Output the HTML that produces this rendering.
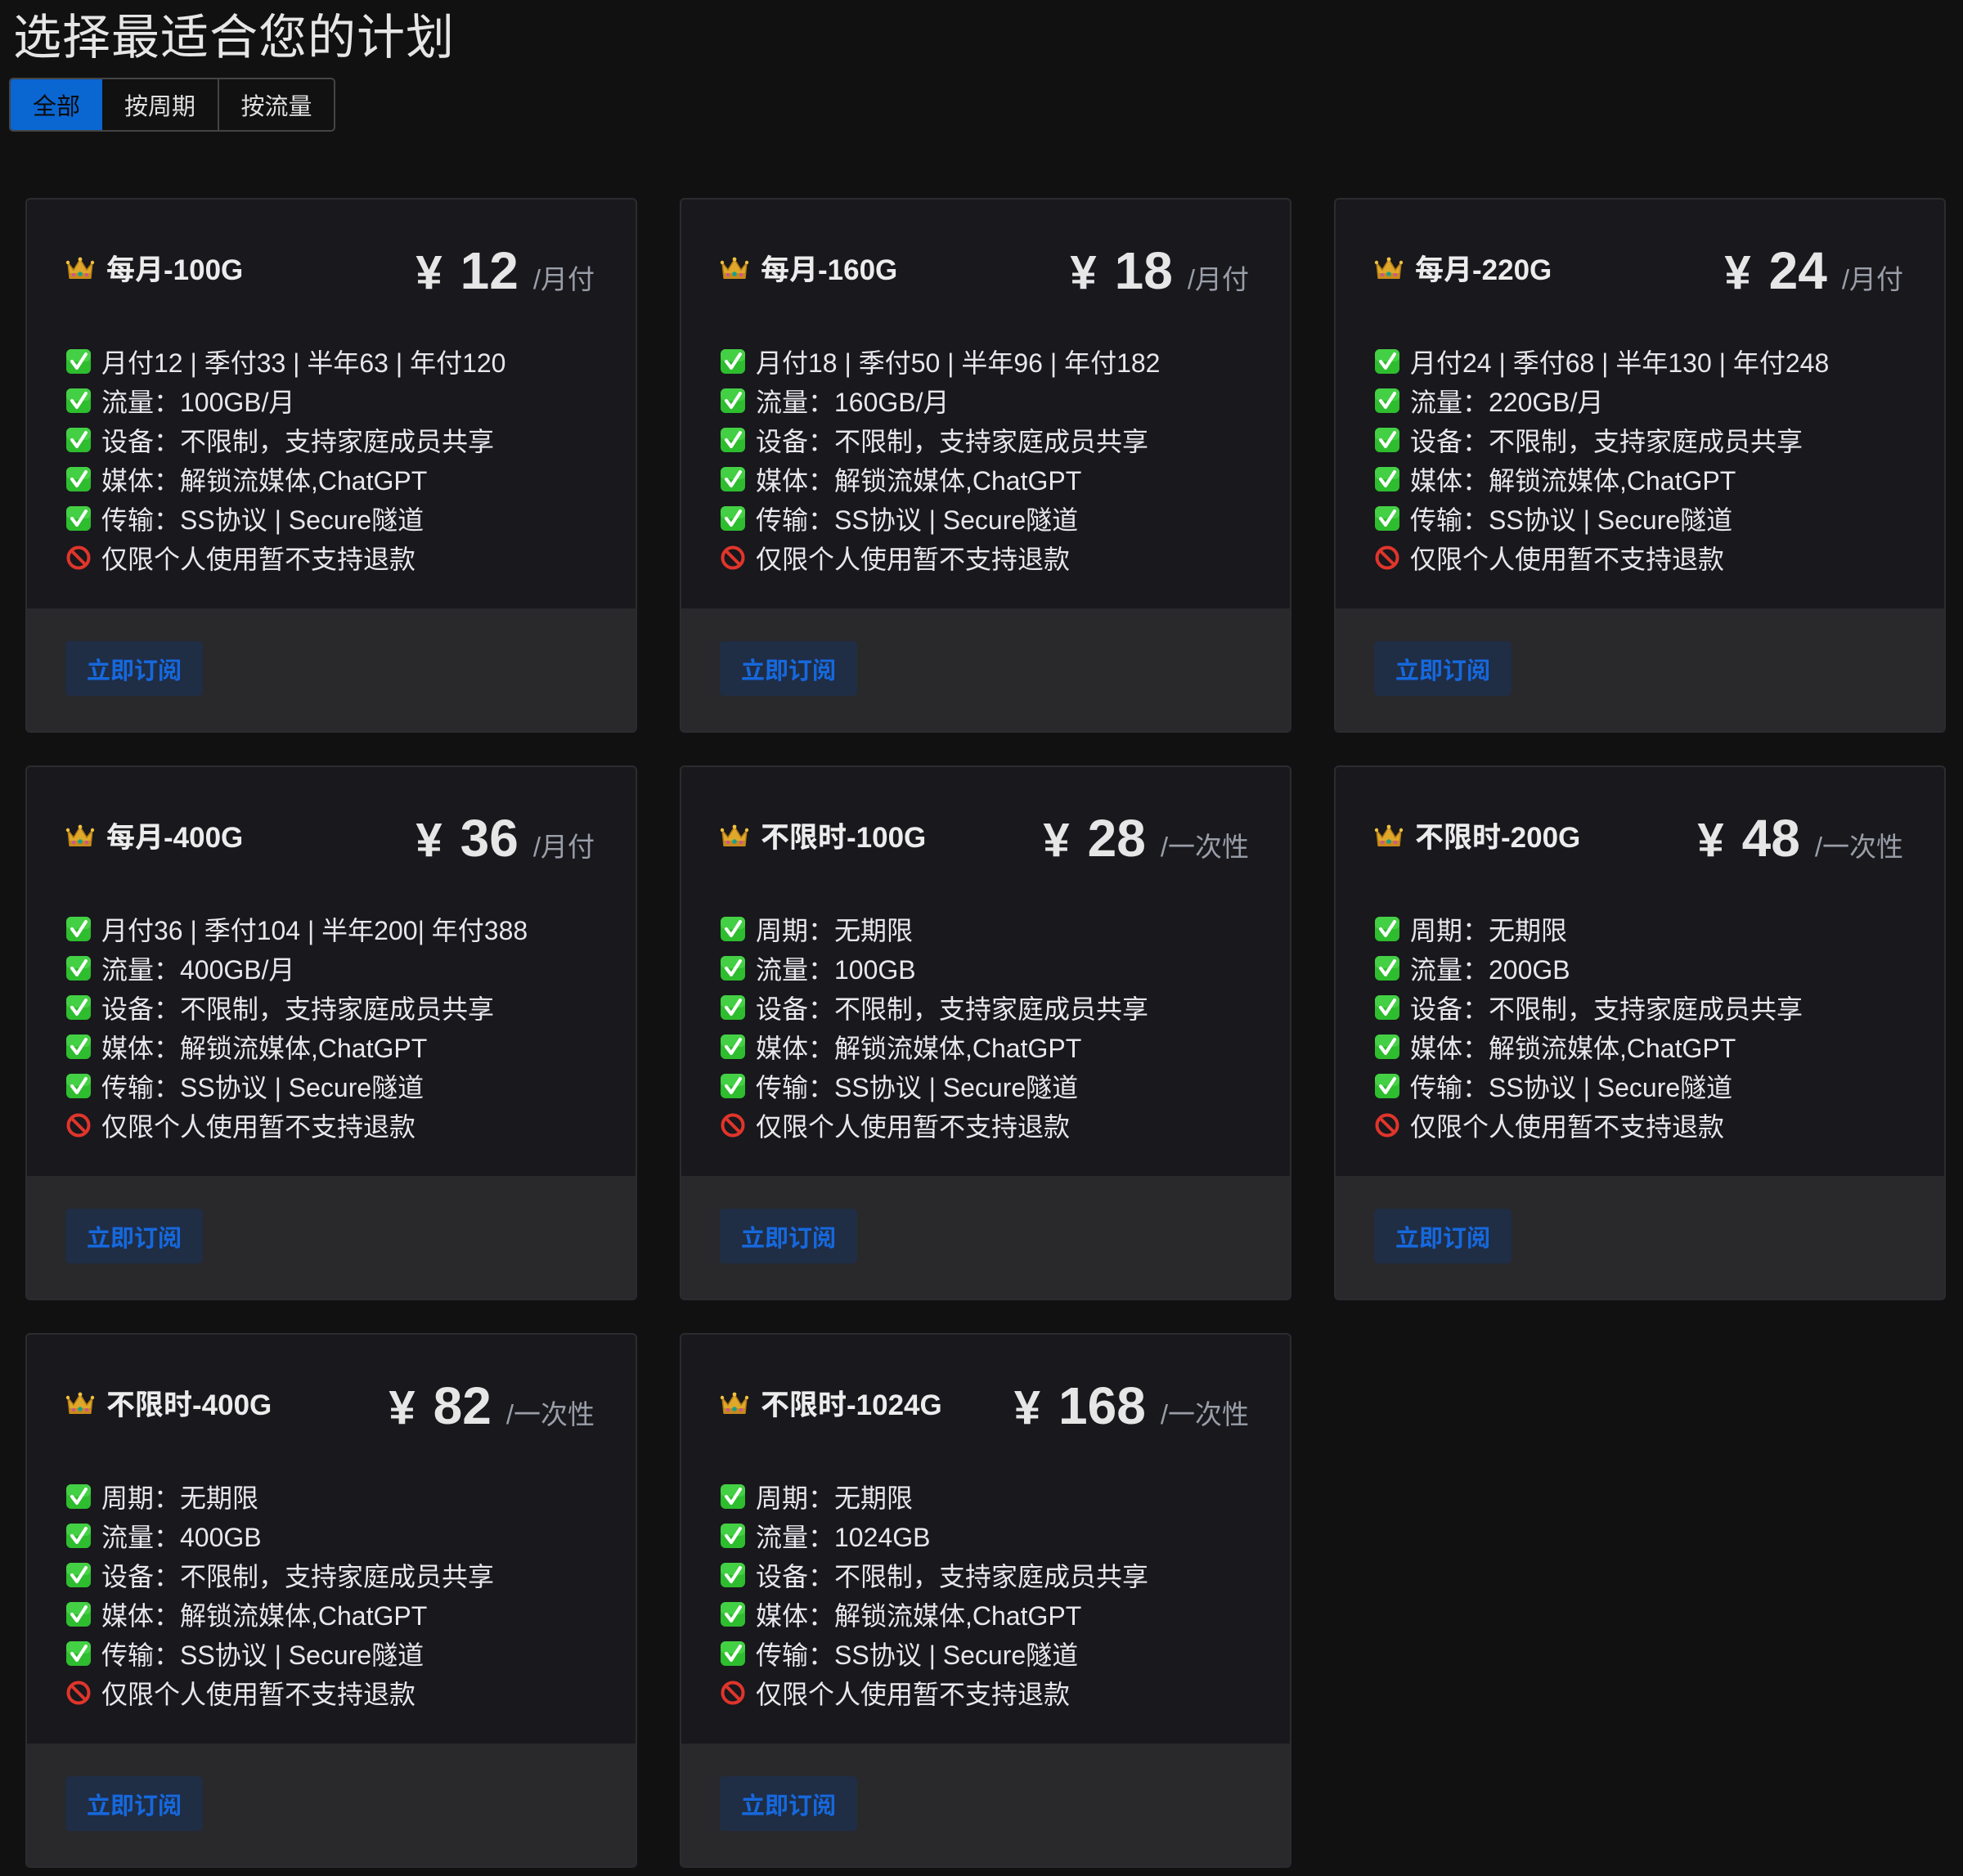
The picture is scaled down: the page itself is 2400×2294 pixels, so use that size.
<!DOCTYPE html>
<html><head><meta charset="utf-8">
<style>
*{box-sizing:border-box;margin:0;padding:0}
html,body{width:2400px;height:2294px;background:#111112;overflow:hidden}
body{font-family:"Liberation Sans","Noto Sans CJK SC",sans-serif;color:#e3e3e6;position:relative}
h1{position:absolute;left:16px;top:-2px;font-size:59px;font-weight:400;color:#e6e6e6;letter-spacing:1px}
.tabs{position:absolute;left:11px;top:95px;height:66px;display:flex;border:2px solid #444;border-radius:5px;overflow:hidden}
.tabs div{height:100%;display:flex;align-items:center;justify-content:center;font-size:29px;color:#e0e0e0}
.tabs .a{width:112px;background:#0a66d1;color:#0b0b0b}
.tabs .b{width:143px;border-right:2px solid #444}
.tabs .c{width:140px}
.card{position:absolute;width:748px;height:654px;background:#18181d;border:2px solid #2b2b30;border-radius:6px;overflow:hidden}
.hd{position:absolute;left:47px;right:50px;top:50px;height:70px}
.nm{position:absolute;left:0;top:8px;display:flex;align-items:center;font-size:35px;font-weight:700;color:#ececec}
.nm svg{margin-right:14px}
.pr{position:absolute;right:0;top:0;white-space:nowrap;color:#e6e6e6}
.pr .y{font-size:58px;font-weight:700;margin-right:22px}
.pr .n{font-size:64px;font-weight:700}
.pr .u{font-size:33px;color:#9a9ea8;margin-left:18px}
.ft{position:absolute;left:47px;top:174px}
.ft div{height:48px;display:flex;align-items:center;font-size:32px;color:#e8e8ea;white-space:nowrap}
.ft svg{margin-right:12px;flex:none}
.fo{position:absolute;left:0;right:0;bottom:0;height:150px;background:#29292c}
.btn{position:absolute;left:47px;top:40px;width:168px;height:67px;background:#1f2d45;border-radius:5px;color:#1668dc;font-size:29px;font-weight:700;display:flex;align-items:center;justify-content:center}
</style></head><body>
<h1>选择最适合您的计划</h1>
<div class="tabs"><div class="a">全部</div><div class="b">按周期</div><div class="c">按流量</div></div>
<svg width="0" height="0" style="position:absolute">
<defs>
<symbol id="ck" viewBox="0 0 32 32"><rect x="1" y="1" width="30" height="30" rx="6" fill="#2ebd2e"/><rect x="1" y="1" width="30" height="15" rx="6" fill="#44d044"/><path d="M8 16 L14 24 L25 7" stroke="#fff" stroke-width="4" fill="none" stroke-linecap="round" stroke-linejoin="round"/></symbol>
<symbol id="no" viewBox="0 0 32 32"><circle cx="16" cy="16" r="12.5" fill="none" stroke="#e0352b" stroke-width="4"/><path d="M7.5 7.5 L24.5 24.5" stroke="#e0352b" stroke-width="4"/></symbol>
<symbol id="cr" viewBox="0 0 36 30"><path d="M3 8 L10 17 L18 4 L26 17 L33 8 L31 27 L5 27 Z" fill="#e0a82a" stroke="#b07a14" stroke-width="1.5"/><rect x="5" y="21" width="26" height="7" fill="#c88a1c"/><circle cx="18" cy="22" r="2.8" fill="#1aa08a"/><circle cx="10" cy="23" r="2" fill="#d04fa0"/><circle cx="26" cy="23" r="2" fill="#d04fa0"/><circle cx="3" cy="8" r="2.2" fill="#f0c040"/><circle cx="18" cy="4" r="2.4" fill="#f0c040"/><circle cx="33" cy="8" r="2.2" fill="#f0c040"/></symbol>
</defs></svg>

<div class="card" style="left:31px;top:242px">
<div class="hd"><div class="nm"><svg width="36" height="32"><use href="#cr"/></svg>每月-100G</div><div class="pr"><span class="y">¥</span><span class="n">12</span><span class="u">/月付</span></div></div>
<div class="ft">
<div><svg width="32" height="32"><use href="#ck"/></svg>月付12 | 季付33 | 半年63 | 年付120</div>
<div><svg width="32" height="32"><use href="#ck"/></svg>流量：100GB/月</div>
<div><svg width="32" height="32"><use href="#ck"/></svg>设备：不限制，支持家庭成员共享</div>
<div><svg width="32" height="32"><use href="#ck"/></svg>媒体：解锁流媒体,ChatGPT</div>
<div><svg width="32" height="32"><use href="#ck"/></svg>传输：SS协议 | Secure隧道</div>
<div><svg width="32" height="32"><use href="#no"/></svg>仅限个人使用暂不支持退款</div>
</div><div class="fo"><div class="btn">立即订阅</div></div></div>

<div class="card" style="left:831px;top:242px">
<div class="hd"><div class="nm"><svg width="36" height="32"><use href="#cr"/></svg>每月-160G</div><div class="pr"><span class="y">¥</span><span class="n">18</span><span class="u">/月付</span></div></div>
<div class="ft">
<div><svg width="32" height="32"><use href="#ck"/></svg>月付18 | 季付50 | 半年96 | 年付182</div>
<div><svg width="32" height="32"><use href="#ck"/></svg>流量：160GB/月</div>
<div><svg width="32" height="32"><use href="#ck"/></svg>设备：不限制，支持家庭成员共享</div>
<div><svg width="32" height="32"><use href="#ck"/></svg>媒体：解锁流媒体,ChatGPT</div>
<div><svg width="32" height="32"><use href="#ck"/></svg>传输：SS协议 | Secure隧道</div>
<div><svg width="32" height="32"><use href="#no"/></svg>仅限个人使用暂不支持退款</div>
</div><div class="fo"><div class="btn">立即订阅</div></div></div>

<div class="card" style="left:1631px;top:242px">
<div class="hd"><div class="nm"><svg width="36" height="32"><use href="#cr"/></svg>每月-220G</div><div class="pr"><span class="y">¥</span><span class="n">24</span><span class="u">/月付</span></div></div>
<div class="ft">
<div><svg width="32" height="32"><use href="#ck"/></svg>月付24 | 季付68 | 半年130 | 年付248</div>
<div><svg width="32" height="32"><use href="#ck"/></svg>流量：220GB/月</div>
<div><svg width="32" height="32"><use href="#ck"/></svg>设备：不限制，支持家庭成员共享</div>
<div><svg width="32" height="32"><use href="#ck"/></svg>媒体：解锁流媒体,ChatGPT</div>
<div><svg width="32" height="32"><use href="#ck"/></svg>传输：SS协议 | Secure隧道</div>
<div><svg width="32" height="32"><use href="#no"/></svg>仅限个人使用暂不支持退款</div>
</div><div class="fo"><div class="btn">立即订阅</div></div></div>

<div class="card" style="left:31px;top:936px">
<div class="hd"><div class="nm"><svg width="36" height="32"><use href="#cr"/></svg>每月-400G</div><div class="pr"><span class="y">¥</span><span class="n">36</span><span class="u">/月付</span></div></div>
<div class="ft">
<div><svg width="32" height="32"><use href="#ck"/></svg>月付36 | 季付104 | 半年200| 年付388</div>
<div><svg width="32" height="32"><use href="#ck"/></svg>流量：400GB/月</div>
<div><svg width="32" height="32"><use href="#ck"/></svg>设备：不限制，支持家庭成员共享</div>
<div><svg width="32" height="32"><use href="#ck"/></svg>媒体：解锁流媒体,ChatGPT</div>
<div><svg width="32" height="32"><use href="#ck"/></svg>传输：SS协议 | Secure隧道</div>
<div><svg width="32" height="32"><use href="#no"/></svg>仅限个人使用暂不支持退款</div>
</div><div class="fo"><div class="btn">立即订阅</div></div></div>

<div class="card" style="left:831px;top:936px">
<div class="hd"><div class="nm"><svg width="36" height="32"><use href="#cr"/></svg>不限时-100G</div><div class="pr"><span class="y">¥</span><span class="n">28</span><span class="u">/一次性</span></div></div>
<div class="ft">
<div><svg width="32" height="32"><use href="#ck"/></svg>周期：无期限</div>
<div><svg width="32" height="32"><use href="#ck"/></svg>流量：100GB</div>
<div><svg width="32" height="32"><use href="#ck"/></svg>设备：不限制，支持家庭成员共享</div>
<div><svg width="32" height="32"><use href="#ck"/></svg>媒体：解锁流媒体,ChatGPT</div>
<div><svg width="32" height="32"><use href="#ck"/></svg>传输：SS协议 | Secure隧道</div>
<div><svg width="32" height="32"><use href="#no"/></svg>仅限个人使用暂不支持退款</div>
</div><div class="fo"><div class="btn">立即订阅</div></div></div>

<div class="card" style="left:1631px;top:936px">
<div class="hd"><div class="nm"><svg width="36" height="32"><use href="#cr"/></svg>不限时-200G</div><div class="pr"><span class="y">¥</span><span class="n">48</span><span class="u">/一次性</span></div></div>
<div class="ft">
<div><svg width="32" height="32"><use href="#ck"/></svg>周期：无期限</div>
<div><svg width="32" height="32"><use href="#ck"/></svg>流量：200GB</div>
<div><svg width="32" height="32"><use href="#ck"/></svg>设备：不限制，支持家庭成员共享</div>
<div><svg width="32" height="32"><use href="#ck"/></svg>媒体：解锁流媒体,ChatGPT</div>
<div><svg width="32" height="32"><use href="#ck"/></svg>传输：SS协议 | Secure隧道</div>
<div><svg width="32" height="32"><use href="#no"/></svg>仅限个人使用暂不支持退款</div>
</div><div class="fo"><div class="btn">立即订阅</div></div></div>

<div class="card" style="left:31px;top:1630px">
<div class="hd"><div class="nm"><svg width="36" height="32"><use href="#cr"/></svg>不限时-400G</div><div class="pr"><span class="y">¥</span><span class="n">82</span><span class="u">/一次性</span></div></div>
<div class="ft">
<div><svg width="32" height="32"><use href="#ck"/></svg>周期：无期限</div>
<div><svg width="32" height="32"><use href="#ck"/></svg>流量：400GB</div>
<div><svg width="32" height="32"><use href="#ck"/></svg>设备：不限制，支持家庭成员共享</div>
<div><svg width="32" height="32"><use href="#ck"/></svg>媒体：解锁流媒体,ChatGPT</div>
<div><svg width="32" height="32"><use href="#ck"/></svg>传输：SS协议 | Secure隧道</div>
<div><svg width="32" height="32"><use href="#no"/></svg>仅限个人使用暂不支持退款</div>
</div><div class="fo"><div class="btn">立即订阅</div></div></div>

<div class="card" style="left:831px;top:1630px">
<div class="hd"><div class="nm"><svg width="36" height="32"><use href="#cr"/></svg>不限时-1024G</div><div class="pr"><span class="y">¥</span><span class="n">168</span><span class="u">/一次性</span></div></div>
<div class="ft">
<div><svg width="32" height="32"><use href="#ck"/></svg>周期：无期限</div>
<div><svg width="32" height="32"><use href="#ck"/></svg>流量：1024GB</div>
<div><svg width="32" height="32"><use href="#ck"/></svg>设备：不限制，支持家庭成员共享</div>
<div><svg width="32" height="32"><use href="#ck"/></svg>媒体：解锁流媒体,ChatGPT</div>
<div><svg width="32" height="32"><use href="#ck"/></svg>传输：SS协议 | Secure隧道</div>
<div><svg width="32" height="32"><use href="#no"/></svg>仅限个人使用暂不支持退款</div>
</div><div class="fo"><div class="btn">立即订阅</div></div></div>
</body></html>
